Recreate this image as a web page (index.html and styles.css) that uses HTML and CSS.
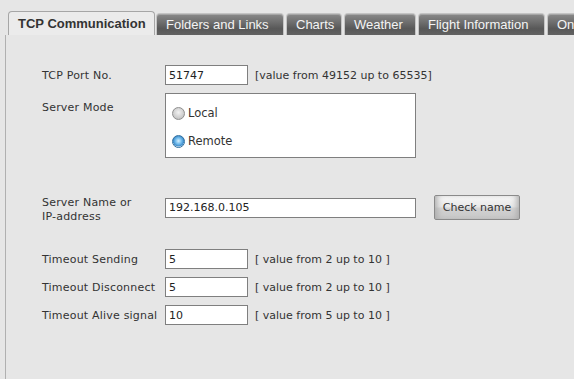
FILE: index.html
```html
<!DOCTYPE html>
<html lang="en">
<head>
    <meta charset="UTF-8">
    <title>TCP Communication</title>
    <link rel="stylesheet" href="styles.css">
</head>
<body>
    <div class="tabs">
        <div class="tab active">TCP Communication</div>
        <div class="tab tab-folders">Folders and Links</div>
        <div class="tab tab-charts">Charts</div>
        <div class="tab tab-weather">Weather</div>
        <div class="tab tab-flight">Flight Information</div>
        <div class="tab tab-more">On</div>
    </div>

    <div class="panel">
        <!-- Port -->
        <div class="row row-port">
            <label class="field-label">TCP Port No.</label>
            <div class="field">
                <input class="text-input short" type="text" value="51747">
                <span class="hint">[value from 49152 up to 65535]</span>
            </div>
        </div>

        <!-- Server mode -->
        <div class="row row-mode">
            <label class="field-label mode-label">Server Mode</label>
            <div class="mode-box">
                <div class="radio-line"><span class="radio"></span>Local</div>
                <div class="radio-line"><span class="radio checked"></span>Remote</div>
            </div>
        </div>

        <!-- Server name -->
        <div class="row row-name">
            <label class="field-label two-line">Server Name or<br>IP-address</label>
            <div class="field">
                <input class="text-input long" type="text" value="192.168.0.105">
                <button class="check-button">Check name</button>
            </div>
        </div>

        <!-- Timeouts -->
        <div class="timeouts">
            <div class="row">
                <label class="field-label">Timeout Sending</label>
                <div class="field">
                    <input class="text-input short" type="text" value="5">
                    <span class="hint">[ value from 2 up to 10 ]</span>
                </div>
            </div>
            <div class="row">
                <label class="field-label">Timeout Disconnect</label>
                <div class="field">
                    <input class="text-input short" type="text" value="5">
                    <span class="hint">[ value from 2 up to 10 ]</span>
                </div>
            </div>
            <div class="row">
                <label class="field-label">Timeout Alive signal</label>
                <div class="field">
                    <input class="text-input short" type="text" value="10">
                    <span class="hint">[ value from 5 up to 10 ]</span>
                </div>
            </div>
        </div>
    </div>
</body>
</html>
```

FILE: styles.css
```css
html, body {
    margin: 0;
    height: 100%;
    overflow: hidden;
}

body {
    background: #e6e6e6;
    font-family: "DejaVu Sans", Verdana, sans-serif;
    font-size: 11px;
    color: #333;
}

/* Tabs */
.tabs {
    display: flex;
    align-items: flex-end;
    gap: 2px;
    height: 35px;
    padding-left: 8px;
    box-sizing: border-box;
    white-space: nowrap;
    overflow: hidden;
}

.tab {
    flex: none;
    box-sizing: border-box;
    height: 22px;
    padding: 0 0 0 9px;
    line-height: 21px;
    font-family: "Liberation Sans", Arial, sans-serif;
    font-size: 13px;
    color: #f4f4f4;
    background: linear-gradient(#8a8a8a, #6a6a6a 45%, #585858 70%, #626262);
    border: 1px solid #c4c4c4;
    border-bottom: none;
    border-radius: 4px 4px 0 0;
    box-shadow: inset 0 1px 0 rgba(255,255,255,0.25);
}

.tab.active {
    height: 24px;
    width: 147px;
    margin-right: -1px;
    padding-left: 9px;
    line-height: 24px;
    font-weight: bold;
    color: #333;
    background: #ebebeb;
    border-color: #a6a6a6;
    box-shadow: none;
}

.tab-folders { width: 128px; }
.tab-charts { width: 56px; }
.tab-weather { width: 72px; }
.tab-flight { width: 127px; }
.tab-more { width: 27px; border-right: none; border-top-right-radius: 0; }

/* Panel */
.panel {
    box-sizing: border-box;
    margin-left: 5px;
    height: 344px;
    border-left: 1px solid #b0b0b0;
    padding: 30px 0 0 36px;
}

.row {
    display: flex;
    align-items: center;
}

.field-label {
    width: 123px;
    flex: none;
    letter-spacing: 0.2px;
}

.field {
    display: flex;
    align-items: center;
}

.text-input {
    box-sizing: border-box;
    height: 20px;
    margin: 0;
    padding: 0 3px;
    border: 1px solid #7f7f7f;
    background: #fff;
    font-family: "DejaVu Sans", Verdana, sans-serif;
    font-size: 11px;
    color: #222;
    outline: none;
}

.text-input.short { width: 83px; }
.text-input.long { width: 251px; }

.hint {
    margin-left: 7px;
}

/* Server mode */
.row-mode {
    align-items: flex-start;
    margin-top: 8px;
}

.mode-label {
    padding-top: 8px;
}

.mode-box {
    box-sizing: border-box;
    width: 251px;
    height: 65px;
    border: 1px solid #7f7f7f;
    background: #fff;
    padding: 12px 0 0 6px;
    display: flex;
    flex-direction: column;
    gap: 14px;
}

.radio-line {
    display: flex;
    align-items: center;
    height: 14px;
    font-size: 11.5px;
}

.radio {
    box-sizing: border-box;
    width: 13px;
    height: 13px;
    margin-right: 3px;
    border-radius: 50%;
    border: 1px solid #8e8e8e;
    background: radial-gradient(circle at 50% 40%, #f2f2f2, #c8c8c8 70%, #b5b5b5);
}

.radio.checked {
    border-color: #2f6f9f;
    background: radial-gradient(circle at 50% 45%, #d8f0ff 0, #79c0ee 35%, #3d8ccb 65%, #dfe9f1 70%);
}

/* Server name */
.row-name {
    margin-top: 37px;
    height: 25px;
}

.two-line {
    line-height: 14px;
    margin-top: 4px;
}

.check-button {
    box-sizing: border-box;
    width: 86px;
    height: 25px;
    margin-left: 18px;
    padding: 0;
    border: 1px solid #8a8a8a;
    border-radius: 2px;
    background: linear-gradient(#f6f6f6, #e9e9e9 45%, #d2d2d2 55%, #c6c6c6);
    box-shadow: inset 6px 0 6px -4px #a9a9a9, inset -6px 0 6px -4px #a9a9a9;
    font-family: "DejaVu Sans", Verdana, sans-serif;
    font-size: 11px;
    color: #333;
}

/* Timeouts */
.timeouts {
    margin-top: 29px;
    display: flex;
    flex-direction: column;
    gap: 8px;
}
```
